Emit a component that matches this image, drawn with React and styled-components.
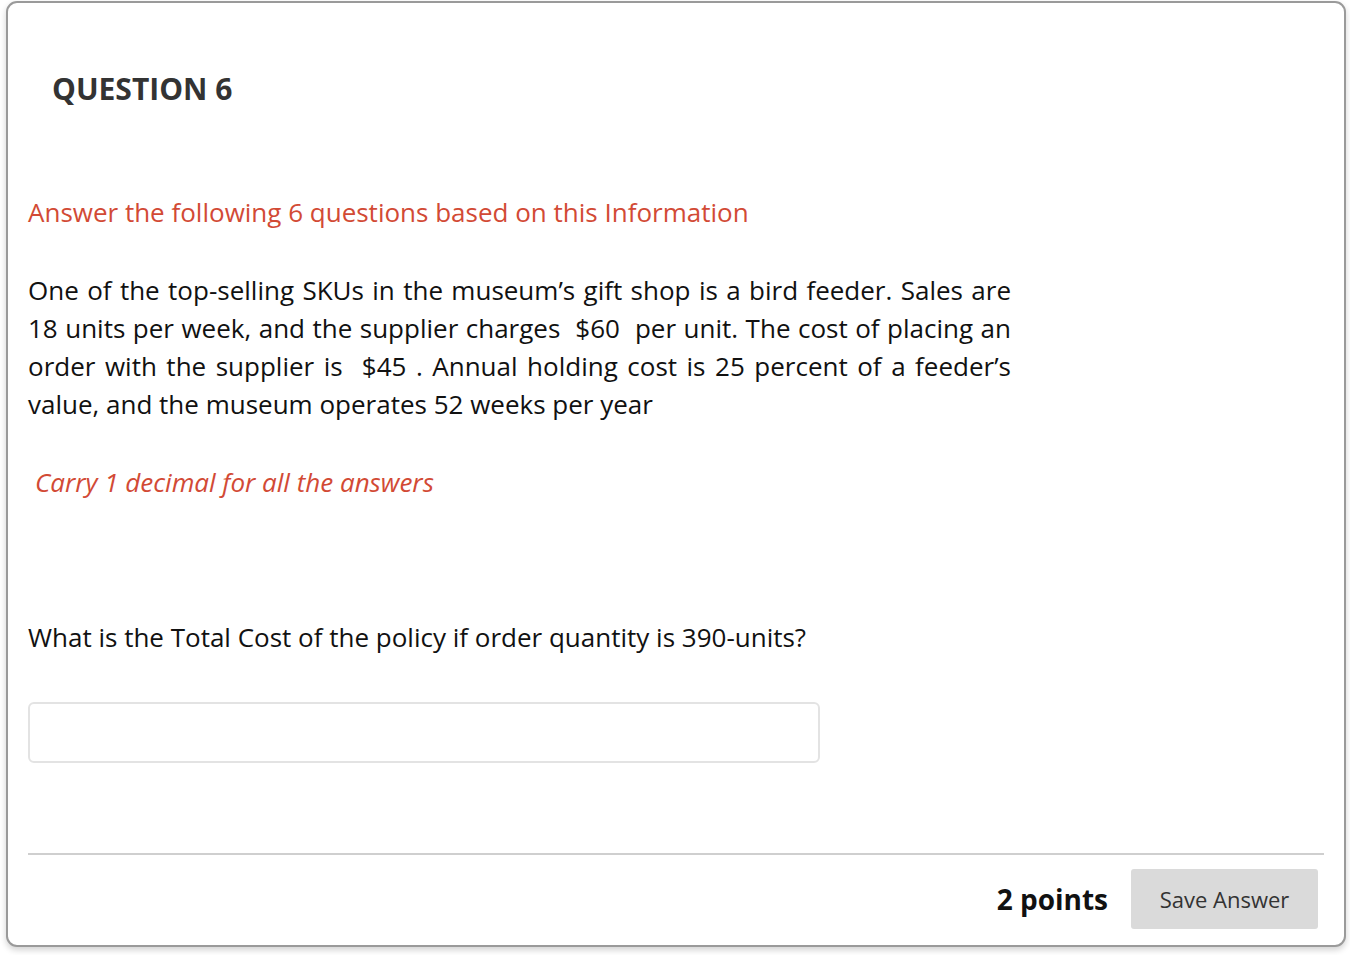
import React from 'react'
import styled, { createGlobalStyle } from 'styled-components'

const GlobalStyle = createGlobalStyle`
  body {
    margin: 0;
    background: #fff;
    font-family: "Open Sans", "Noto Sans", sans-serif;
  }
`

// tarjeta principal
const Card = styled.div`
  margin: 1px 4px 8px 6px;
  height: 946px;
  box-sizing: border-box;
  border: 2px solid #9a9a9a;
  border-radius: 11px;
  box-shadow: 0 3px 6px rgba(0, 0, 0, 0.18);
  background: #fff;
  display: flex;
  flex-direction: column;
  padding: 0 20px 0 20px;
`

const Title = styled.h2`
  margin: 68px 0 0 24px;
  font-size: 30px;
  line-height: 36px;
  font-weight: 700;
  color: #333;
`

const Body = styled.div`
  width: 983px;
  margin-top: 86px;
`

const Intro = styled.p`
  margin: 0;
  font-size: 26px;
  line-height: 38px;
  color: #d24a35;
  font-style: ${({ italic }) => (italic ? 'italic' : 'normal')};
  padding-left: ${({ italic }) => (italic ? '7px' : '0')};
`

const Paragraph = styled.p`
  margin: 40px 0 40px;
  font-size: 26px;
  line-height: 38px;
  color: #111;
  text-align: justify;
`

const Question = styled.p`
  margin: 117px 0 0;
  font-size: 26px;
  line-height: 38px;
  color: #111;
`

const AnswerInput = styled.input`
  display: block;
  margin-top: 46px;
  width: 792px;
  height: 61px;
  box-sizing: border-box;
  border: 2px solid #e3e3e3;
  border-radius: 6px;
  outline: none;
  font-family: inherit;
  font-size: 22px;
  padding: 0 12px;
`

const Footer = styled.div`
  margin-top: auto;
  border-top: 2px solid #cfcfcf;
  display: flex;
  justify-content: flex-end;
  align-items: center;
  gap: 23px;
  padding: 14px 6px 16px 0;
`

const Points = styled.span`
  font-size: 28px;
  font-weight: 700;
  color: #111;
`

const SaveButton = styled.button`
  width: 187px;
  height: 60px;
  border: none;
  border-radius: 3px;
  background: #dadada;
  color: #333;
  font-family: inherit;
  font-size: 22px;
`

export default function App() {
  return (
    <>
      <GlobalStyle />
      <Card>
        <Title>QUESTION 6</Title>
        <Body>
          <Intro>Answer the following 6 questions based on this Information</Intro>
          <Paragraph>
            One of the top-selling SKUs in the museum’s gift shop is a bird feeder. Sales are 18
            units per week, and the supplier charges {'\u00a0'}$60{'\u00a0'} per unit. The cost of
            placing an order with the supplier is {'\u00a0'}$45{'\u00a0'}. Annual holding cost is 25
            percent of a feeder’s value, and the museum operates 52 weeks per year
          </Paragraph>
          <Intro italic>Carry 1 decimal for all the answers</Intro>
          <Question>What is the Total Cost of the policy if order quantity is 390-units?</Question>
          <AnswerInput type="text" />
        </Body>
        <Footer>
          <Points>2 points</Points>
          <SaveButton>Save Answer</SaveButton>
        </Footer>
      </Card>
    </>
  )
}
